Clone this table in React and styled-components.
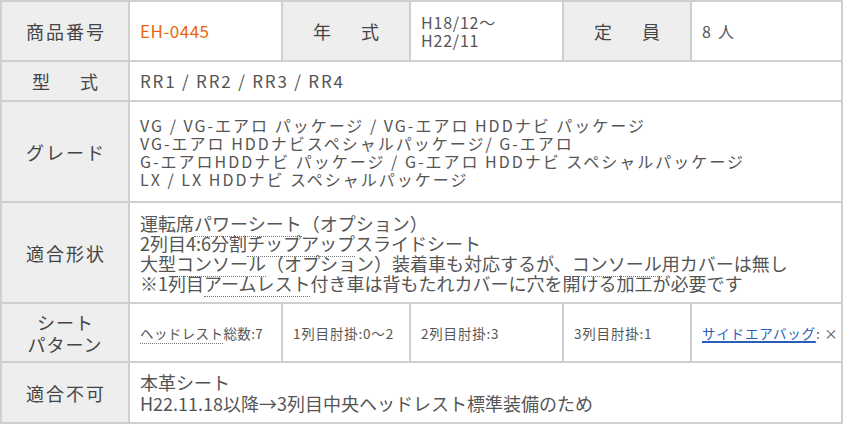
import React from 'react'
import styled, { createGlobalStyle } from 'styled-components'

const GlobalStyle = createGlobalStyle`
  html, body {
    margin: 0;
    padding: 0;
    background: #fff;
  }
  body {
    font-family: "Noto Sans CJK JP", "Noto Sans", sans-serif;
    color: #555;
  }
`

const Table = styled.div`
  display: grid;
  grid-template-columns: 126px 151px 126px 151px 126px 149px;
  grid-template-rows: 58px 38px 99px 99px 57px 59px;
  gap: 2px;
  padding: 2px;
  width: 843px;
  box-sizing: border-box;
  background: #cfcfcf;
`

const Label = styled.div`
  display: flex;
  align-items: center;
  justify-content: center;
  text-align: center;
  background: #eeeeee;
  color: #444;
  font-size: ${p => p.$size || 18}px;
  line-height: 22px;
  letter-spacing: ${p => p.$spacing || 2}px;
  text-indent: ${p => p.$spacing || 2}px;
`

const Cell = styled.div`
  grid-column: span ${p => p.$span || 1};
  display: flex;
  flex-direction: column;
  justify-content: center;
  padding: 0 10px;
  background: #fff;
  font-size: ${p => p.$size || 17}px;
  line-height: ${p => p.$lh || 20}px;
  letter-spacing: ${p => p.$ls || 0}px;
  white-space: nowrap;
  overflow: hidden;
`

const Row = styled.div`
  height: ${p => p.$h || 20}px;
  line-height: ${p => p.$h || 20}px;
`

const Code = styled.span`
  color: #e8670c;
  font-size: 17px;
  letter-spacing: 0.5px;
`

const Term = styled.span`
  border-bottom: 1px dotted #777;
`

const Link = styled.a`
  color: #2a5fb8;
  text-decoration: underline;
  text-decoration-thickness: 2px;
  text-underline-offset: 2px;
`

const App = () => (
  <>
    <GlobalStyle />
    <Table>
      <Label>商品番号</Label>
      <Cell><Code>EH-0445</Code></Cell>
      <Label $spacing={30}>年式</Label>
      <Cell $size={16} $ls={0.8}>
        <Row $h={18}>H18/12～</Row>
        <Row $h={18}>H22/11</Row>
      </Cell>
      <Label $spacing={30}>定員</Label>
      <Cell $size={16}>8&nbsp;&nbsp;人</Cell>

      <Label $spacing={30}>型式</Label>
      <Cell $span={5} $size={17} $ls={1.8}>RR1 / RR2 / RR3 / RR4</Cell>

      <Label>グレード</Label>
      <Cell $span={5} $size={16} $ls={2}>
        <Row $h={18}>VG / VG-エアロ パッケージ / VG-エアロ HDDナビ パッケージ</Row>
        <Row $h={18}>VG-エアロ HDDナビスペシャルパッケージ/ G-エアロ</Row>
        <Row $h={18}>G-エアロHDDナビ パッケージ / G-エアロ HDDナビ スペシャルパッケージ</Row>
        <Row $h={18}>LX / LX HDDナビ スペシャルパッケージ</Row>
      </Cell>

      <Label>適合形状</Label>
      <Cell $span={5} $size={18}>
        <Row $h={20}>運転席<Term>パワーシート</Term>（オプション）</Row>
        <Row $h={20}>2列目4:6分割<Term>チップアップ</Term>スライドシート</Row>
        <Row $h={20}>大型<Term>コンソール</Term>（オプション）装着車も対応するが、<Term>コンソール</Term>用カバーは無し</Row>
        <Row $h={20}>※1列目<Term>アームレスト</Term>付き車は背もたれカバーに穴を開ける加工が必要です</Row>
      </Cell>

      <Label $spacing={1}>シート<br />パターン</Label>
      <Cell $size={13.5} $ls={0.4}><span><Term>ヘッドレスト</Term>総数:7</span></Cell>
      <Cell $size={13.5} $ls={0.8}>1列目肘掛:0～2</Cell>
      <Cell $size={13.5} $ls={0.8}>2列目肘掛:3</Cell>
      <Cell $size={13.5} $ls={0.8}>3列目肘掛:1</Cell>
      <Cell $size={13.5} $ls={0.8}><span><Link href="#">サイドエアバッグ</Link>: ×</span></Cell>

      <Label>適合不可</Label>
      <Cell $span={5} $size={18}>
        <Row $h={21}>本革シート</Row>
        <Row $h={21}>H22.11.18以降→3列目中央ヘッドレスト標準装備のため</Row>
      </Cell>
    </Table>
  </>
)

export default App
